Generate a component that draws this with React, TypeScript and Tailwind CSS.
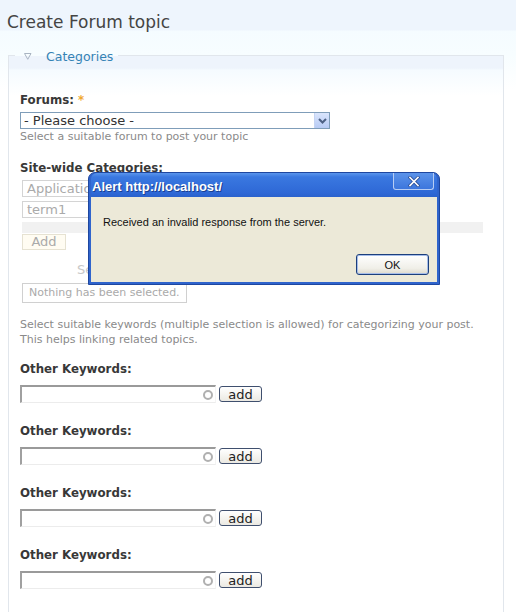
import React from 'react';

const label = "font-bold text-[11.8px] leading-4 text-[#383838]";

function KeywordRow({ first }: { first?: boolean }) {
  return (
    <div className={first ? "mt-[14px]" : "mt-[20px]"}>
      <div className={label}>Other Keywords:</div>
      <div className="mt-[8px] flex items-center gap-[3px]">
        <div className="relative w-[196px] h-[18px] border-t-2 border-l-2 border-b border-r border-t-[#9a9a9a] border-l-[#a0a0a0] border-b-[#ececec] border-r-[#f4f4f4] bg-white">
          <span className="absolute right-[2px] top-[3px] w-[10px] h-[10px] rounded-full border-2 border-[#b0b0b0]" />
        </div>
        <button className="w-[43px] h-[16px] rounded-[3px] border border-[#3f4f6e] bg-[linear-gradient(#ffffff,#ebe9e2)] text-[13px] leading-[13px] text-[#222] font-['DejaVu_Sans',sans-serif]">
          add
        </button>
      </div>
    </div>
  );
}

export default function App() {
  return (
    <div className="relative h-[612px] w-[516px] overflow-hidden bg-[linear-gradient(180deg,#eef5fd_0px,#eef5fd_30px,#f5fcff_31px,#f7fdff_55px,#ffffff_90px)] font-['DejaVu_Sans',sans-serif] text-[#333]">
      <h1 className="pl-[7px] pt-[12px] h-[31px] text-[17px] leading-[20px] text-[#444] font-normal">Create Forum topic</h1>

      <fieldset className="mt-[17px] ml-[8px] w-[496px] min-h-[600px] border border-[#e1e6ec] px-[11px] bg-[linear-gradient(180deg,#eef4fc_0px,#eef4fc_12px,#f5fbff_14px,#ffffff_40px)]">
        <legend className="ml-[-5px] pl-[9px] pr-[5px] h-[14px]">
          <span className="flex items-center h-[14px]">
            <svg width="8" height="7" viewBox="0 0 8 7" className="mt-[2px]">
              <path d="M0.5 0.5 H7 L3.75 6.3 Z" fill="none" stroke="#a9b4c2" strokeWidth="1" />
            </svg>
            <span className="ml-[14px] text-[12.5px] leading-[14px] text-[#3583b5] mt-[3px]">Categories</span>
          </span>
        </legend>

        <div className="mt-[30px]">
          <div className={label}>
            Forums: <span className="text-[#f0a830]">*</span>
          </div>
          <div className="mt-[4px] flex items-center w-[310px] h-[17px] border border-[#7f9db9] bg-white">
            <span className="flex-1 pl-[3px] text-[13px] leading-[15px] text-[#333]">- Please choose -</span>
            <span className="flex items-center justify-center w-[15px] h-[15px] bg-[linear-gradient(#dae5fc,#b7cbf5)] border-l border-[#c5d4f3]">
              <svg width="9" height="6" viewBox="0 0 9 6">
                <path d="M1 1 L4.5 4.5 L8 1" fill="none" stroke="#4d6185" strokeWidth="2" />
              </svg>
            </span>
          </div>
          <div className="mt-[1px] text-[11px] leading-[14px] text-[#8a8a8a]">Select a suitable forum to post your topic</div>

          <div className={`${label} mt-[16px]`}>Site-wide Categories:</div>
          <div className="mt-[4px] ml-[2px] w-[200px] h-[17px] border border-[#d4d4d4] pl-[4px] text-[13px] leading-[15px] text-[#aaa]">Application</div>
          <div className="mt-[4px] ml-[2px] w-[200px] h-[17px] border border-[#d4d4d4] pl-[4px] text-[13px] leading-[15px] text-[#aaa]">term1</div>
          <div className="mt-[4px] ml-[2px] w-[461px] h-[11px] bg-[#f1f1f1]" />
          <div className="mt-[1px] ml-[2px] w-[44px] h-[16px] border border-[#e6e2d2] bg-[#fffcf2] text-center text-[13px] leading-[14px] text-[#aaa]">Add</div>
          <div className="mt-[12px] h-[16px] pl-[57px] text-[13px] leading-[16px] text-[#c8c8c8]">Selected terms</div>
          <div className="mt-[5px] ml-[2px] w-[165px] h-[20px] border border-[#d0d0d0] pl-[6px] text-[11px] leading-[18px] text-[#aaa]">Nothing has been selected.</div>

          <p className="mt-[14px] text-[11px] leading-[15px] text-[#8a8a8a]">
            Select suitable keywords (multiple selection is allowed) for categorizing your post.
            <br />
            This helps linking related topics.
          </p>

          <KeywordRow first />
          <KeywordRow />
          <KeywordRow />
          <KeywordRow />
        </div>
      </fieldset>

      {/* alert overlay */}
      <div className="absolute left-[88px] top-[172px] w-[352px] h-[113px] flex flex-col rounded-t-[7px] bg-[#2f64cc] border border-[#1e47a0] px-[2px] pb-[2px] font-['Liberation_Sans',sans-serif]">
        <div className="relative h-[24px] shrink-0 rounded-t-[6px] bg-[linear-gradient(180deg,#5a95ec_0px,#3a78e0_4px,#2e68d6_20px,#2a62cc_24px)]">
          <span className="absolute left-[1px] top-[6px] text-[13px] leading-[15px] font-bold text-white [text-shadow:1px_1px_0_#1a3f90]">Alert http://localhost/</span>
          <span className="absolute right-[3px] top-0 w-[41px] h-[17px] rounded-b-[3px] border border-t-0 border-[#b7cdf3] bg-[linear-gradient(#5b93ea,#3c76dd)] flex items-center justify-center">
            <svg width="12" height="11" viewBox="0 0 12 11">
              <path d="M2 1.5 L10 9.5 M10 1.5 L2 9.5" stroke="#2a4f9a" strokeWidth="3.2" strokeLinecap="square" />
              <path d="M2 1.5 L10 9.5 M10 1.5 L2 9.5" stroke="#ffffff" strokeWidth="1.6" strokeLinecap="square" />
            </svg>
          </span>
        </div>
        <div className="flex-1 bg-[#ece9d8] relative">
          <div className="absolute left-[12px] top-[18px] text-[11px] leading-[14px] text-[#111]">
            Received an invalid response from the server.
          </div>
          <button className="absolute left-[265px] top-[57px] w-[73px] h-[21px] rounded-[3px] border border-[#1c3f7c] bg-[linear-gradient(#ffffff,#f0efe8_70%,#dcd9cc)] shadow-[inset_0_0_0_1px_#a6bde9] text-[11px] leading-[14px] text-[#111]">
            OK
          </button>
        </div>
      </div>
    </div>
  );
}
